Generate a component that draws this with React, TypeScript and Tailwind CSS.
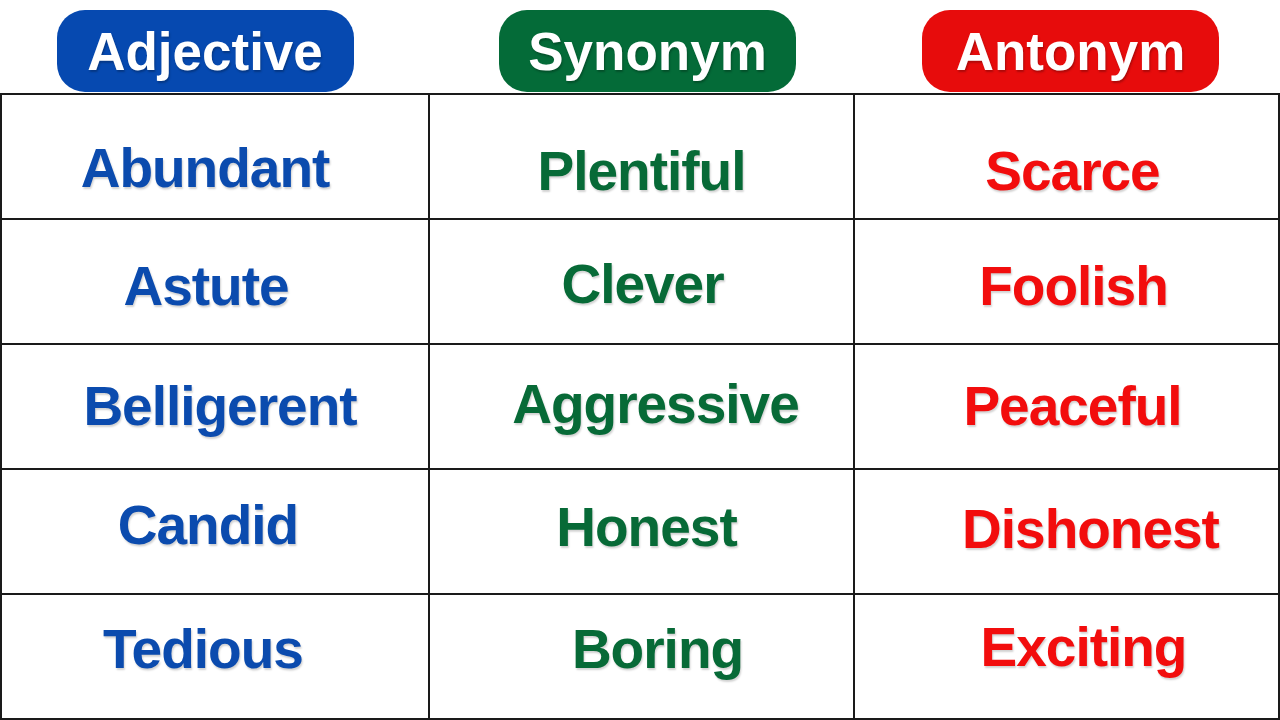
const headers = [
  { label: 'Adjective', bg: 'bg-[#0649b0]', pad: 'pr-[20px]' },
  { label: 'Synonym', bg: 'bg-[#046b38]', pad: 'pl-[10px]' },
  { label: 'Antonym', bg: 'bg-[#e70c0c]', pad: 'pl-[6px]' },
];

// each cell nudges its word a little, like in the original slide
const rows = [
  [
    { word: 'Abundant', pad: 'pr-[20px] pt-[24px]' },
    { word: 'Plentiful', pad: 'pt-[30px]' },
    { word: 'Scarce', pad: 'pl-[12px] pt-[30px]' },
  ],
  [
    { word: 'Astute', pad: 'pr-[18px] pt-[10px]' },
    { word: 'Clever', pad: 'pl-[2px] pt-[6px]' },
    { word: 'Foolish', pad: 'pl-[14px] pt-[10px]' },
  ],
  [
    { word: 'Belligerent', pad: 'pl-[10px]' },
    { word: 'Aggressive', pad: 'pl-[28px] pb-[4px]' },
    { word: 'Peaceful', pad: 'pl-[12px]' },
  ],
  [
    { word: 'Candid', pad: 'pr-[14px] pb-[12px]' },
    { word: 'Honest', pad: 'pl-[10px] pb-[8px]' },
    { word: 'Dishonest', pad: 'pl-[48px] pb-[4px]' },
  ],
  [
    { word: 'Tedious', pad: 'pr-[24px] pb-[14px]' },
    { word: 'Boring', pad: 'pl-[32px] pb-[14px]' },
    { word: 'Exciting', pad: 'pl-[34px] pb-[18px]' },
  ],
];

const colColors = ['text-[#0b4bae]', 'text-[#076a37]', 'text-[#f20d0d]'];

export default function App() {
  return (
    <div className="w-[1280px] h-[720px] bg-white overflow-hidden font-['Liberation_Sans',Arial,sans-serif] font-bold">
      {/* Header pills */}
      <div className="grid grid-cols-[430px_425px_425px] h-[93px]">
        {headers.map((h) => (
          <div key={h.label} className={`flex justify-center pt-[10px] ${h.pad}`}>
            <div
              className={`${h.bg} w-[297px] h-[82px] rounded-[28px] flex items-center justify-center text-white text-[53px] leading-none [text-shadow:1px_2px_2px_rgba(0,0,0,0.25)]`}
            >
              {h.label}
            </div>
          </div>
        ))}
      </div>

      {/* Word table */}
      <div className="border-l-2 border-t-2 border-[#1a1a1a] grid grid-cols-[428px_425px_425px]">
        {rows.map((row, r) =>
          row.map((cell, c) => (
            <div
              key={`${r}-${c}`}
              className={`h-[125px] border-r-2 border-b-2 border-[#1a1a1a] flex items-center justify-center ${cell.pad}`}
            >
              <span
                className={`${colColors[c]} text-[55px] leading-none tracking-[-1px] [text-shadow:1px_2px_2px_rgba(0,0,0,0.18)]`}
              >
                {cell.word}
              </span>
            </div>
          ))
        )}
      </div>
    </div>
  );
}
